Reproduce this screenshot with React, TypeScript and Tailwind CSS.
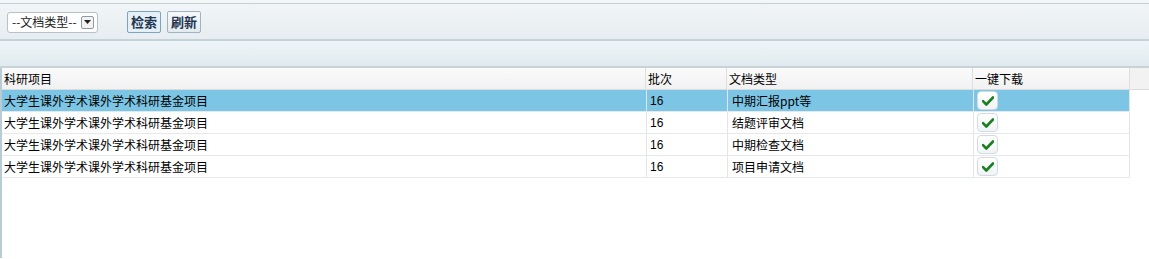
import { useState } from "react";

type DocRow = {
  project: string;
  batch: number;
  docType: string;
};

const rows: DocRow[] = [
  { project: "大学生课外学术课外学术科研基金项目", batch: 16, docType: "中期汇报ppt等" },
  { project: "大学生课外学术课外学术科研基金项目", batch: 16, docType: "结题评审文档" },
  { project: "大学生课外学术课外学术科研基金项目", batch: 16, docType: "中期检查文档" },
  { project: "大学生课外学术课外学术科研基金项目", batch: 16, docType: "项目申请文档" },
];

export default function App() {
  const [selected, setSelected] = useState(0);

  return (
    <div className="h-[259px] w-[1149px] overflow-hidden bg-white font-['Noto_Sans_CJK_SC','Noto_Sans',sans-serif] text-[12px] text-black">
      <div className="h-[4px] border-b border-[#c3d0d6] bg-[#f4f7f8]" />

      <div className="flex h-[37px] items-center border-b-2 border-[#c5d2d8] bg-gradient-to-b from-[#f1f5f7] to-[#e7edf0] pl-[7px] pt-[1px]">
        <div className="flex h-[21px] w-[91px] items-center justify-between rounded-[3px] border border-[#b7c2c8] bg-white pl-[4px] pr-[3px]">
          <span className="leading-none text-[#222]">--文档类型--</span>
          <span className="flex h-[13px] w-[13px] items-center justify-center rounded-[2px] border border-[#8d9aa3] bg-[#f3f3f3]">
            <svg width="7" height="4" viewBox="0 0 7 4">
              <path d="M0 0h7L3.5 4z" fill="#222" />
            </svg>
          </span>
        </div>

        <div className="ml-[29px] flex gap-[6px]">
          <ToolButton label="检索" active />
          <ToolButton label="刷新" />
        </div>
      </div>

      <div className="h-[27px] border-b-2 border-[#c8d3d8] bg-gradient-to-b from-[#eef5f8] to-[#e1eaee]" />

      <div className="h-[190px] border-l-2 border-[#b9ccd3]">
        <div className="flex h-[22px] w-[1147px] items-center border-b border-[#d8dde0] bg-gradient-to-b from-[#fbfbfb] to-[#f1f1f1]">
          <HeadCell className="w-[644px]">科研项目</HeadCell>
          <HeadCell className="w-[81px]">批次</HeadCell>
          <HeadCell className="w-[246px]">文档类型</HeadCell>
          <HeadCell className="w-[157px]">一键下载</HeadCell>
          <div className="h-full flex-1 bg-[#f2f2f2]" />
        </div>

        {rows.map((row, i) => (
          <div
            key={row.docType}
            onClick={() => setSelected(i)}
            className={`flex h-[22px] w-[1128px] items-center border-b border-[#e6e9eb] ${
              selected === i ? "bg-[#7dc5e5]" : "bg-white"
            }`}
          >
            <div className="flex h-full w-[644px] items-center pl-[2px]">{row.project}</div>
            <div className="flex h-full w-[81px] items-center border-l border-[#e3e6e8] pl-[3px] font-['Liberation_Sans',sans-serif]">
              {row.batch}
            </div>
            <div className="flex h-full w-[246px] items-center border-l border-[#e3e6e8] pl-[4px]">
              {row.docType}
            </div>
            <div className="flex h-full flex-1 items-center border-l border-r border-[#e3e6e8] pl-[3px]">
              <span className="flex h-[19px] w-[21px] items-center justify-center rounded-[4px] border border-[#d3dbe0] bg-gradient-to-b from-white to-[#f1f4f6]">
                <svg width="12" height="10" viewBox="0 0 12 10">
                  <path
                    d="M1 5.2l3.3 3.3L11 1.5"
                    fill="none"
                    stroke="#1b7f22"
                    strokeWidth="2.6"
                    strokeLinecap="round"
                    strokeLinejoin="round"
                  />
                </svg>
              </span>
            </div>
          </div>
        ))}
      </div>
    </div>
  );
}

function HeadCell({ className, children }: { className: string; children: string }) {
  return (
    <div className={`flex h-full items-center border-r border-[#dcdfe1] pl-[2px] ${className}`}>
      {children}
    </div>
  );
}

function ToolButton({ label, active }: { label: string; active?: boolean }) {
  return (
    <button
      type="button"
      className={`flex h-[22px] items-center rounded-[2px] border px-[3px] text-[13px] font-bold text-[#1e3450] ${
        active
          ? "border-[#7fa3b8] bg-[#e4f0f6]"
          : "border-[#9fb4c2] bg-gradient-to-b from-[#f6f9fa] to-[#e3ebef]"
      }`}
    >
      {label}
    </button>
  );
}
